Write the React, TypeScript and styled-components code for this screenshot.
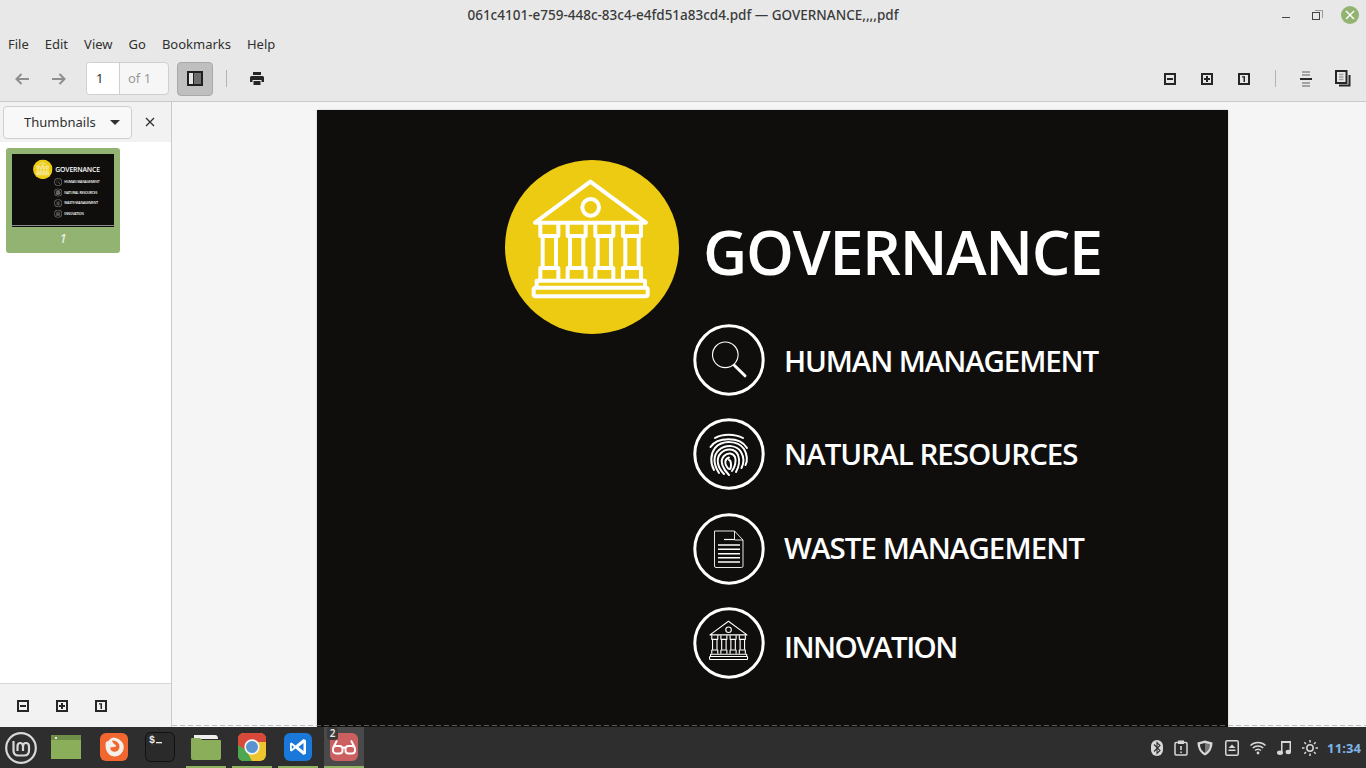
import React from 'react';
import styled, { createGlobalStyle } from 'styled-components';

const GlobalStyle = createGlobalStyle`
  html, body { margin: 0; padding: 0; background: #e8e8e8; }
  * { box-sizing: border-box; }
  body { font-family: 'Noto Sans', 'Open Sans', sans-serif; color: #303030; }
`;

const Screen = styled.div`
  width: 1366px;
  height: 768px;
  display: flex;
  flex-direction: column;
  overflow: hidden;
`;

const TitleBar = styled.div`
  height: 34px;
  flex: none;
  position: relative;
  display: flex;
  align-items: center;
  justify-content: flex-end;
  padding: 0 7px 4px 0;
  background: #e8e8e8;
`;

const TitleText = styled.div`
  position: absolute;
  left: 0;
  right: 0;
  top: 6px;
  text-align: center;
  font-size: 13.5px;
  font-weight: 500;
  line-height: 18px;
  color: #3a3a3a;
`;

const WindowButtons = styled.div`
  display: flex;
  align-items: center;
  gap: 16px;
`;

const MenuBar = styled.div`
  height: 22px;
  flex: none;
  display: flex;
  background: #e8e8e8;
`;

const MenuItem = styled.div`
  padding: 0 8px;
  font-size: 13px;
  line-height: 21px;
  color: #303030;
`;

const ToolBar = styled.div`
  height: 46px;
  flex: none;
  display: flex;
  align-items: center;
  padding: 0 15px 0 14px;
  background: #e8e8e8;
  border-bottom: 1px solid #cacaca;
`;

const ToolIcon = styled.div<{ $w?: number; $ml?: number }>`
  width: ${({ $w }) => $w ?? 16}px;
  margin-left: ${({ $ml }) => $ml ?? 0}px;
  display: flex;
  justify-content: center;
  flex: none;
`;

const PageEntry = styled.div`
  width: 83px;
  height: 33px;
  margin-left: 19px;
  display: flex;
  border: 1px solid #cfcfcf;
  border-radius: 4px;
  background: #f6f6f6;
  font-size: 13px;
  line-height: 31px;
`;

const PageInput = styled.div`
  width: 33px;
  padding-left: 9px;
  background: #fff;
  border-right: 1px solid #cfcfcf;
  border-radius: 3px 0 0 3px;
  color: #303030;
`;

const PageTotal = styled.div`
  padding-left: 8px;
  color: #9a9a9a;
`;

const ToggleButton = styled.div`
  width: 36px;
  height: 34px;
  margin-left: 8px;
  display: flex;
  align-items: center;
  justify-content: center;
  background: #bfbfbf;
  border: 1px solid #a9a9a9;
  border-radius: 4px;
`;

const ToolSeparator = styled.div<{ $ml: number }>`
  width: 1px;
  height: 17px;
  margin-left: ${({ $ml }) => $ml}px;
  background: #b4b4b4;
  flex: none;
`;

const Spacer = styled.div`
  flex: 1;
`;

const Body = styled.div`
  flex: 1;
  min-height: 0;
  display: flex;
`;

const Sidebar = styled.aside`
  width: 172px;
  flex: none;
  display: flex;
  flex-direction: column;
  border-right: 1px solid #cacaca;
  background: #fff;
`;

const SideHeader = styled.div`
  height: 40px;
  flex: none;
  display: flex;
  align-items: center;
  padding: 0 0 0 3px;
  background: #f2f2f2;
`;

const SideSelect = styled.div`
  width: 129px;
  height: 33px;
  display: flex;
  align-items: center;
  justify-content: space-between;
  padding: 0 11px 0 20px;
  background: #f8f8f8;
  border: 1px solid #cfcfcf;
  border-radius: 4px;
  font-size: 13px;
  color: #303030;
`;

const Caret = styled.div`
  width: 0;
  height: 0;
  border-left: 5px solid transparent;
  border-right: 5px solid transparent;
  border-top: 5px solid #303030;
`;

const SideClose = styled.div`
  margin-left: 13px;
  display: flex;
`;

const ThumbList = styled.div`
  flex: 1;
  padding: 6px;
  background: #fff;
`;

const ThumbTile = styled.div`
  width: 114px;
  height: 105px;
  padding: 6px;
  background: #93b373;
  border-radius: 3px;
  display: flex;
  flex-direction: column;
  align-items: center;
`;

const ThumbPage = styled.div`
  width: 102px;
  height: 73px;
  overflow: hidden;
  position: relative;
  background: #0f0e0d;

  &::after {
    content: '';
    position: absolute;
    left: 0;
    right: 0;
    bottom: 1px;
    height: 1px;
    background: #8a8a8a;
  }
`;

const ThumbScale = styled.div`
  transform: scale(0.112);
  transform-origin: 0 0;
  width: 911px;
`;

const ThumbLabel = styled.div`
  margin-top: 3px;
  font-size: 13px;
  line-height: 17px;
  font-style: italic;
  color: #f2f6ee;
`;

const SideFooter = styled.div`
  height: 44px;
  flex: none;
  display: flex;
  align-items: center;
  gap: 27px;
  padding: 0 0 0 17px;
  background: #f2f2f2;
  border-top: 1px solid #d6d6d6;
`;

const View = styled.main`
  flex: 1;
  min-width: 0;
  position: relative;
  overflow: hidden;
  padding: 8px 0 0 145px;
  background: #f5f5f5;

  &::after {
    content: '';
    position: absolute;
    left: 0;
    right: 0;
    bottom: 1px;
    height: 1px;
    background: repeating-linear-gradient(
      90deg,
      rgba(150, 150, 150, 0.55) 0 5px,
      transparent 5px 8px
    );
  }
`;

const PageSheet = styled.div`
  width: 911px;
  height: 652px;
  padding: 50px 0 0 188px;
  background: #0f0e0d;
  color: #fff;
  font-family: 'Open Sans', 'Noto Sans', sans-serif;
  box-shadow: 0 0 2px rgba(0, 0, 0, 0.2);
`;

const PosterHead = styled.div`
  display: flex;
  align-items: center;
  gap: 24px;
`;

const PosterTitle = styled.div`
  font-size: 61px;
  font-weight: 600;
  line-height: 70px;
  letter-spacing: -1.3px;
  margin-top: 10px;
  white-space: nowrap;
`;

const PosterList = styled.div`
  margin: -10.5px 0 0 188px;
  display: flex;
  flex-direction: column;
  gap: 22.5px;
`;

const PosterRow = styled.div`
  display: flex;
  align-items: center;
  gap: 19px;
  height: 72px;
`;

// the labels do not sit at the same height against their rings in the pdf
const PosterLabel = styled.div<{ $dy: number; $ls: number }>`
  margin-top: ${({ $dy }) => $dy * 2}px;
  font-size: 29.5px;
  font-weight: 600;
  letter-spacing: ${({ $ls }) => $ls}px;
  white-space: nowrap;
`;

const TaskBar = styled.div`
  height: 41px;
  flex: none;
  display: flex;
  align-items: stretch;
  padding-left: 5px;
  background: #2e2e2e;
`;

const StartButton = styled.div`
  width: 41px;
  display: flex;
  align-items: center;
`;

const TaskSlot = styled.div<{ $running?: boolean; $active?: boolean; $mr?: number }>`
  width: 40px;
  margin-right: ${({ $mr }) => $mr ?? 6}px;
  position: relative;
  display: flex;
  align-items: center;
  justify-content: center;
  background: ${({ $active }) => ($active ? '#4a4a4a' : 'transparent')};
  border-bottom: 2px solid ${({ $running }) => ($running ? '#8fb35f' : 'transparent')};
`;

const Badge = styled.div`
  position: absolute;
  left: 3px;
  top: 0;
  width: 11px;
  height: 13px;
  border-radius: 3px;
  background: #3a3a3a;
  color: #e6e6e6;
  font-size: 10px;
  font-weight: 600;
  line-height: 13px;
  text-align: center;
`;

const Tray = styled.div`
  margin-left: auto;
  display: flex;
  align-items: center;
  gap: 8px;
  padding: 0 5px 0 0;
`;

const TrayIcon = styled.div<{ $mr?: number }>`
  width: 18px;
  margin-right: ${({ $mr }) => $mr ?? 0}px;
  display: flex;
  justify-content: center;
`;

const Clock = styled.div`
  font-size: 13px;
  font-weight: 700;
  color: #7fb4e8;
  letter-spacing: 0.1px;
`;

const DARK = '#262626';

function BankShape({ stroke }: { stroke: number }) {
  const cols = [178, 260, 343, 426];
  return (
    <g fill="none" stroke="#fff" strokeWidth={stroke} strokeLinejoin="round">
      <path d="M135 218 L301 95 L468 218 Z" />
      <circle cx="302" cy="172" r="25" />
      {cols.map((x) => (
        <g key={x}>
          <path d={`M${x - 27} 222 V258 H${x + 27} V222`} />
          <path d={`M${x - 20} 258 V352 M${x + 20} 258 V352`} />
          <path d={`M${x - 27} 388 V354 H${x + 27} V388`} />
        </g>
      ))}
      <path d="M140 412 V392 H465 V412" />
      <rect x="131" y="413" width="342" height="26" rx="6" />
    </g>
  );
}

function Ring({ children }: { children: React.ReactNode }) {
  return (
    <svg width="72" height="72" viewBox="0 0 72 72" fill="none" stroke="#fff">
      <circle cx="36" cy="36" r="34.2" strokeWidth="3" />
      {children}
    </svg>
  );
}

function SearchIcon() {
  return (
    <Ring>
      <circle cx="32.3" cy="30.8" r="12.8" strokeWidth="1.1" />
      <path d="M41.5 41.5 L52 51.8" strokeWidth="3" strokeLinecap="round" />
    </Ring>
  );
}

function FingerIcon() {
  return (
    <Ring>
      <g strokeWidth="2" strokeLinecap="round">
        <path d="M22 20 C29 15.5 42 15.5 50 20" />
        <path d="M17.5 29 C24 19 47 18 54 30" />
        <path d="M21 52 C17 45 17.5 36 22 30 C29 22 45 22 51 31 C54 36 55 43 52.5 47" />
        <path d="M26 55 C20 46 20 37 26 32 C33 26 44 27 48 34 C51 39 51 45 48.5 50" />
        <path d="M31 56 C25 50 22 41 28 35 C33 30 42 30 45 37 C47 42 46 49 43 54" />
        <path d="M36 57 C30 51 26 43 31 38 C35 34 40 35 42 39 C43.5 43 42 49 39 53" />
        <path d="M36 39.5 C32 41 31 45 34 49 C36 52 38 52 38 47 C38 44 37 42 36 42" />
      </g>
    </Ring>
  );
}

function DocIcon() {
  return (
    <Ring>
      <path d="M21.5 18 H41.5 L50 27 V53 Q50 54.5 48.5 54.5 H23 Q21.5 54.5 21.5 53 Z" strokeWidth="0.9" />
      <path d="M41.5 18 V27 H50" strokeWidth="0.9" />
      <path d="M31 26.5 H41" strokeWidth="1.2" />
      <path d="M25 32 H47 M25 36.3 H47 M25 40.8 H47 M25 44.8 H47 M25 49 H47" strokeWidth="1.5" />
    </Ring>
  );
}

function BankSmallIcon() {
  return (
    <Ring>
      <g transform="translate(7 7) scale(0.1111) translate(-45 -30)">
        <BankShape stroke={10} />
      </g>
    </Ring>
  );
}

const ROWS = [
  { label: 'HUMAN MANAGEMENT', Icon: SearchIcon, dy: 1, ls: -1.13 },
  { label: 'NATURAL RESOURCES', Icon: FingerIcon, dy: -1, ls: -0.97 },
  { label: 'WASTE MANAGEMENT', Icon: DocIcon, dy: -1.5, ls: -0.93 },
  { label: 'INNOVATION', Icon: BankSmallIcon, dy: 3.5, ls: -1.55 },
];

function Poster() {
  return (
    <PageSheet>
      <PosterHead>
        <svg width="174" height="174" viewBox="45 30 522 522">
          <circle cx="306" cy="291" r="261" fill="#edcb12" />
          <BankShape stroke={12} />
        </svg>
        <PosterTitle>GOVERNANCE</PosterTitle>
      </PosterHead>
      <PosterList>
        {ROWS.map((r) => (
          <PosterRow key={r.label}>
            <r.Icon />
            <PosterLabel $dy={r.dy} $ls={r.ls}>{r.label}</PosterLabel>
          </PosterRow>
        ))}
      </PosterList>
    </PageSheet>
  );
}

function ZoomOut() {
  return (
    <svg width="12" height="12" viewBox="0 0 12 12">
      <rect x="1" y="1" width="10" height="10" fill="none" stroke={DARK} strokeWidth="2" />
      <rect x="3" y="5" width="6" height="2" fill={DARK} />
    </svg>
  );
}

function ZoomIn() {
  return (
    <svg width="12" height="12" viewBox="0 0 12 12">
      <rect x="1" y="1" width="10" height="10" fill="none" stroke={DARK} strokeWidth="2" />
      <path d="M3 5 H5 V3 H7 V5 H9 V7 H7 V9 H5 V7 H3 Z" fill={DARK} />
    </svg>
  );
}

function ZoomOne() {
  return (
    <svg width="12" height="12" viewBox="0 0 12 12">
      <rect x="1" y="1" width="10" height="10" fill="none" stroke={DARK} strokeWidth="2" />
      <path d="M4 3.2 H7 V9 H5.5 V4.6 H4 Z" fill={DARK} />
    </svg>
  );
}

function MintLogo() {
  return (
    <svg width="32" height="32" viewBox="0 0 32 32" fill="none" stroke="#d8d8d8">
      <circle cx="16" cy="16" r="14.8" strokeWidth="2.2" />
      <path d="M8.5 9 V18.5 Q8.5 23.5 13.5 23.5 H19 Q24 23.5 24 18.5 V14.5 Q24 11 20.9 11 Q18 11 18 14.5 V19 M18 14.5 Q18 11 15.1 11 Q12.5 11 12.5 14.5 V19" strokeWidth="2.2" />
    </svg>
  );
}

function GreenWindow() {
  return (
    <svg width="30" height="24" viewBox="0 0 30 24">
      <rect width="30" height="24" fill="#8bae5a" />
      <rect width="30" height="5" fill="#6f8f48" />
      <rect x="4" y="2" width="2" height="2" fill="#e8e8e8" />
    </svg>
  );
}

function Firefox() {
  return (
    <svg width="28" height="28" viewBox="0 0 28 28">
      <rect width="28" height="28" rx="6" fill="#f2672f" />
      <path d="M14 4.5 C11 5 9.5 6.5 9 7.5 L6 9 C4.5 14 6.5 23 14.5 23.5 C20 23.5 24 19 23.7 13.5 C23.4 9 19.5 5.5 14 4.5 Z" fill="#f5f0ea" />
      <path d="M12 7.5 C16 7 20 10 19.5 14.5 C19 17.5 16.5 19 14 18.8 C11.5 18.5 10 16.5 10.3 14.5 L13.5 14 C15 14 16 13.5 16 12.5 C15 11 13 11 12 7.5 Z" fill="#f2672f" />
    </svg>
  );
}

function TerminalIcon() {
  return (
    <svg width="30" height="30" viewBox="0 0 30 30">
      <rect x="0.5" y="0.5" width="29" height="29" rx="5" fill="#2a2a2a" stroke="#111" />
      <text x="4" y="11" fontFamily="'Liberation Mono', monospace" fontSize="10" fontWeight="700" fill="#eee">$</text>
      <rect x="11" y="10" width="6" height="1.3" fill="#eee" />
    </svg>
  );
}

function FolderIcon() {
  return (
    <svg width="30" height="26" viewBox="0 0 30 26">
      <path d="M3 1 H24 Q27 1 27 5 H3 Z" fill="#eee" />
      <path d="M0 5 Q0 4 1 4 H9 L11 6 H29 Q30 6 30 7 V24 Q30 26 28 26 H2 Q0 26 0 24 Z" fill="#8bae5a" />
    </svg>
  );
}

function ChromeIcon() {
  return (
    <svg width="28" height="28" viewBox="0 0 28 28">
      <rect width="28" height="28" rx="6" fill="#efc52d" />
      <path d="M0 6 Q0 0 6 0 H22 Q28 0 28 6 V9 H14 L7 19 L0 13 Z" fill="#d9493b" />
      <path d="M0 12 L8 17 L14 28 H6 Q0 28 0 22 Z" fill="#4da750" />
      <circle cx="14" cy="14" r="7.7" fill="#f4f4f4" />
      <circle cx="14" cy="14" r="6" fill="#5a93cf" />
    </svg>
  );
}

function VsCodeIcon() {
  return (
    <svg width="28" height="28" viewBox="0 0 28 28">
      <rect width="28" height="28" rx="6" fill="#1a78d8" />
      <path d="M19.5 6 L22 7.2 V20.8 L19.5 22 L11.5 15.6 L7.5 18.6 L6 17.8 V10.2 L7.5 9.4 L11.5 12.4 Z M19.5 10 L14.5 14 L19.5 18 Z M7.8 12 V16 L10 14 Z" fill="#fff" fillRule="evenodd" />
    </svg>
  );
}

function XreaderIcon() {
  return (
    <svg width="28" height="28" viewBox="0 0 28 28" fill="none">
      <rect width="28" height="28" rx="6" fill="#cc5f5f" />
      <g stroke="#fff" strokeWidth="1.9">
        <rect x="3" y="13" width="9.5" height="7.5" rx="3" />
        <rect x="15.5" y="13" width="9.5" height="7.5" rx="3" />
        <path d="M12.5 15 Q14 14 15.5 15 M3.5 14 L7 7.5 M24.5 14 L21 7.5" />
      </g>
    </svg>
  );
}

export default function App() {
  return (
    <Screen>
      <GlobalStyle />
      <TitleBar>
        <TitleText>061c4101-e759-448c-83c4-e4fd51a83cd4.pdf — GOVERNANCE,,,,pdf</TitleText>
        <WindowButtons>
          <svg width="18" height="12" viewBox="0 0 18 12"><rect x="9" y="8" width="8" height="1" fill="#444" /></svg>
          <svg width="18" height="12" viewBox="0 0 18 12" fill="none">
            <path d="M8 1.5 H15.5 V9" stroke="#999" />
            <rect x="5.5" y="3.5" width="7" height="7" stroke="#444" />
          </svg>
          <svg width="18" height="18" viewBox="0 0 18 18">
            <circle cx="9" cy="9" r="9" fill="#93b373" />
            <path d="M5 5 L13 13 M13 5 L5 13" stroke="#fff" strokeWidth="1.4" />
          </svg>
        </WindowButtons>
      </TitleBar>

      <MenuBar>
        {['File', 'Edit', 'View', 'Go', 'Bookmarks', 'Help'].map((m) => (
          <MenuItem key={m}>{m}</MenuItem>
        ))}
      </MenuBar>

      <ToolBar>
        <ToolIcon>
          <svg width="14" height="12" viewBox="0 0 14 12" fill="none" stroke="#8e8e8e" strokeWidth="2">
            <path d="M14 6 H2 M6.5 1 L1.5 6 L6.5 11" />
          </svg>
        </ToolIcon>
        <ToolIcon $ml={21}>
          <svg width="14" height="12" viewBox="0 0 14 12" fill="none" stroke="#8e8e8e" strokeWidth="2">
            <path d="M0 6 H12 M7.5 1 L12.5 6 L7.5 11" />
          </svg>
        </ToolIcon>
        <PageEntry>
          <PageInput>1</PageInput>
          <PageTotal>of 1</PageTotal>
        </PageEntry>
        <ToggleButton>
          <svg width="16" height="15" viewBox="0 0 16 15">
            <rect x="0" y="0" width="16" height="15" fill="#1f1f1f" />
            <rect x="2" y="2" width="4" height="11" fill="#e6e6e6" />
            <rect x="7" y="2" width="7" height="11" fill="#6e6e6e" />
          </svg>
        </ToggleButton>
        <ToolSeparator $ml={13} />
        <ToolIcon $ml={22}>
          <svg width="14" height="14" viewBox="0 0 14 14" fill={DARK}>
            <rect x="3" y="0" width="8" height="3" />
            <path d="M1.5 4 H12.5 Q14 4 14 5.5 V10 H11.5 V8 H2.5 V10 H0 V5.5 Q0 4 1.5 4 Z" />
            <rect x="3.5" y="9" width="7" height="4" />
          </svg>
        </ToolIcon>
        <Spacer />
        <ToolIcon $w={12}><ZoomOut /></ToolIcon>
        <ToolIcon $w={12} $ml={25}><ZoomIn /></ToolIcon>
        <ToolIcon $w={12} $ml={25}><ZoomOne /></ToolIcon>
        <ToolSeparator $ml={25} />
        <ToolIcon $w={12} $ml={24}>
          <svg width="12" height="16" viewBox="0 0 12 16" fill="#a2a2a2">
            <rect x="2" y="0" width="8" height="2" />
            <rect x="2" y="3" width="8" height="2" />
            <rect x="0" y="7" width="12" height="2" fill={DARK} />
            <rect x="2" y="11" width="8" height="2" />
            <rect x="2" y="14" width="8" height="2" />
          </svg>
        </ToolIcon>
        <ToolIcon $ml={23}>
          <svg width="16" height="17" viewBox="0 0 16 17" fill="none">
            <path d="M14.5 5 V15.5 H4" stroke={DARK} strokeWidth="2" />
            <rect x="1" y="1" width="10.5" height="12" stroke={DARK} strokeWidth="2" />
            <path d="M4 4.5 H8.5 M4 7 H8.5 M4 9.5 H8.5" stroke="#a2a2a2" strokeWidth="1.5" />
          </svg>
        </ToolIcon>
      </ToolBar>

      <Body>
        <Sidebar>
          <SideHeader>
            <SideSelect>
              Thumbnails
              <Caret />
            </SideSelect>
            <SideClose>
              <svg width="10" height="10" viewBox="0 0 10 10" stroke="#303030" strokeWidth="1.3">
                <path d="M1 1 L9 9 M9 1 L1 9" />
              </svg>
            </SideClose>
          </SideHeader>
          <ThumbList>
            <ThumbTile>
              <ThumbPage>
                <ThumbScale>
                  <Poster />
                </ThumbScale>
              </ThumbPage>
              <ThumbLabel>1</ThumbLabel>
            </ThumbTile>
          </ThumbList>
          <SideFooter>
            <ZoomOut />
            <ZoomIn />
            <ZoomOne />
          </SideFooter>
        </Sidebar>
        <View>
          <Poster />
        </View>
      </Body>

      <TaskBar>
        <StartButton><MintLogo /></StartButton>
        <TaskSlot $mr={8}><GreenWindow /></TaskSlot>
        <TaskSlot><Firefox /></TaskSlot>
        <TaskSlot><TerminalIcon /></TaskSlot>
        <TaskSlot $running><FolderIcon /></TaskSlot>
        <TaskSlot $running><ChromeIcon /></TaskSlot>
        <TaskSlot $running><VsCodeIcon /></TaskSlot>
        <TaskSlot $running $active>
          <Badge>2</Badge>
          <XreaderIcon />
        </TaskSlot>
        <Tray>
          <TrayIcon $mr={-2}>
            <svg width="12" height="16" viewBox="0 0 12 16">
              <rect width="12" height="16" rx="6" fill="#d8d8d8" />
              <path d="M3 4.5 L9 10.5 L6 13.5 V2.5 L9 5.5 L3 11.5" fill="none" stroke="#2e2e2e" strokeWidth="1.1" />
            </svg>
          </TrayIcon>
          <TrayIcon $mr={-2}>
            <svg width="14" height="16" viewBox="0 0 14 16" fill="none">
              <rect x="1" y="2.5" width="12" height="12.5" rx="1" stroke="#d8d8d8" strokeWidth="1.5" />
              <rect x="4" y="0.5" width="6" height="3.5" fill="#d8d8d8" />
              <path d="M7 6 V10 M7 11.5 V13" stroke="#d8d8d8" strokeWidth="1.6" />
            </svg>
          </TrayIcon>
          <TrayIcon $mr={1}>
            <svg width="16" height="16" viewBox="0 0 16 16">
              <path d="M8 0.5 L15.5 2.5 C15.5 8 13 13 8 15.5 C3 13 0.5 8 0.5 2.5 Z" fill="#d8d8d8" />
              <path d="M8 3 L13 4.2 C13 8 11.5 11 8 13 Z" fill="#777" />
              <path d="M8 3 L3 4.2 C3 8 4.5 11 8 13 Z" fill="#2e2e2e" />
            </svg>
          </TrayIcon>
          <TrayIcon>
            <svg width="14" height="16" viewBox="0 0 14 16" fill="none">
              <rect x="0.75" y="0.75" width="12.5" height="14.5" rx="1.5" stroke="#d8d8d8" strokeWidth="1.5" />
              <path d="M7 4.5 L10.5 8 H3.5 Z" fill="#d8d8d8" />
              <rect x="3.5" y="9.5" width="7" height="1.5" fill="#d8d8d8" />
            </svg>
          </TrayIcon>
          <TrayIcon>
            <svg width="16" height="14" viewBox="0 0 16 14" fill="none" stroke="#d8d8d8" strokeWidth="1.5">
              <path d="M0.5 4.5 C4.5 0.5 11.5 0.5 15.5 4.5" />
              <path d="M2.8 7 C5.5 4.3 10.5 4.3 13.2 7" />
              <path d="M5 9.5 C6.7 8 9.3 8 11 9.5" />
              <circle cx="8" cy="12" r="1.4" fill="#d8d8d8" stroke="none" />
            </svg>
          </TrayIcon>
          <TrayIcon>
            <svg width="14" height="15" viewBox="0 0 14 15" fill="#d8d8d8">
              <path d="M4 1 H14 V12 H12.5 V3 H5.5 V13 H4 Z" />
              <ellipse cx="3" cy="12.8" rx="3" ry="2.2" />
              <ellipse cx="11.3" cy="12" rx="2.7" ry="2.2" />
            </svg>
          </TrayIcon>
          <TrayIcon>
            <svg width="16" height="16" viewBox="0 0 16 16" fill="none" stroke="#d8d8d8" strokeWidth="1.5">
              <circle cx="8" cy="8" r="3.2" />
              <path d="M8 0 V2.5 M8 13.5 V16 M0 8 H2.5 M13.5 8 H16 M2.3 2.3 L4 4 M12 12 L13.7 13.7 M2.3 13.7 L4 12 M12 4 L13.7 2.3" />
            </svg>
          </TrayIcon>
          <Clock>11:34</Clock>
        </Tray>
      </TaskBar>
    </Screen>
  );
}
